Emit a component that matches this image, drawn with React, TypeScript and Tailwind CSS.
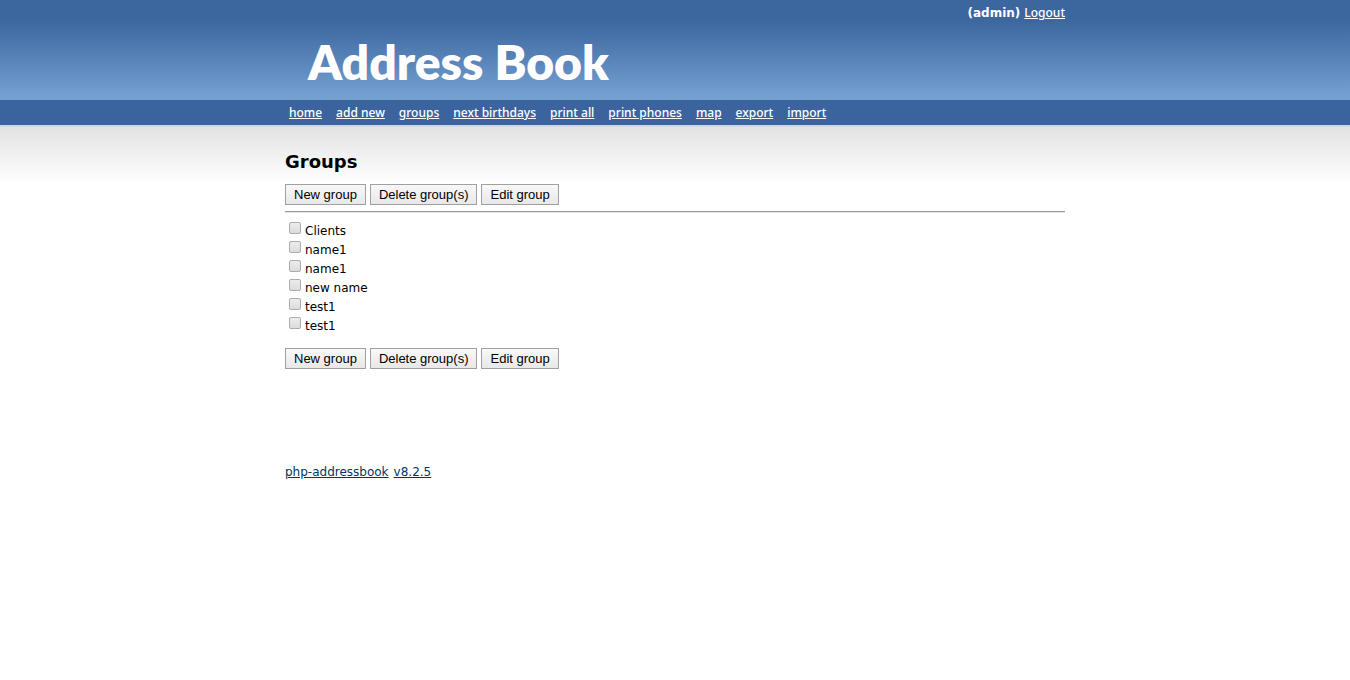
const navItems = [
  'home',
  'add new',
  'groups',
  'next birthdays',
  'print all',
  'print phones',
  'map',
  'export',
  'import',
];

const groups = ['Clients', 'name1', 'name1', 'new name', 'test1', 'test1'];

const actions = ['New group', 'Delete group(s)', 'Edit group'];

function Actions() {
  return (
    <div className="flex gap-1">
      {actions.map((label) => (
        <button
          key={label}
          type="button"
          className="h-[21px] border border-[#a0a0a0] bg-linear-to-b from-[#f8f8f8] to-[#e8e8e8] px-2 font-['Liberation_Sans',Arial,sans-serif] text-[13px] leading-[19px] whitespace-nowrap text-black"
        >
          {label}
        </button>
      ))}
    </div>
  );
}

export default function App() {
  return (
    <div className="min-h-screen bg-white font-[Verdana,'DejaVu_Sans',sans-serif] text-[12px] leading-[19px] text-black">
      <header className="h-[100px] bg-linear-to-b from-[#3c669e] from-20% to-[#739fd1] to-95% text-white">
        <div className="mx-auto max-w-[780px]">
          <div className="flex h-[25px] items-baseline justify-end gap-1 pt-[3px]">
            <b>(admin)</b>
            <a href="#logout" className="font-['Noto_Sans',sans-serif] font-medium underline">
              Logout
            </a>
          </div>
          <h1 className="pl-[23px] font-[Lato,sans-serif] text-[48px] leading-[74px] font-extrabold whitespace-nowrap">
            Address Book
          </h1>
        </div>
      </header>
      <nav className="border-b-2 border-[#cfd8e5] bg-[#3b649e]">
        <ul className="mx-auto flex h-[25px] max-w-[780px] items-center gap-3.5 pl-1 font-['Noto_Sans',sans-serif] font-medium whitespace-nowrap text-white">
          {navItems.map((item) => (
            <li key={item}>
              <a href={`#${item.replace(' ', '-')}`} className="underline">
                {item}
              </a>
            </li>
          ))}
        </ul>
      </nav>
      <div className="bg-linear-to-b from-[#e3e3e3] to-white to-[56px]">
        <main className="mx-auto max-w-[780px] pt-[23px]">
          <h2 className="mb-2.5 text-[18px] leading-6 font-bold">Groups</h2>
          <Actions />
          <hr className="mt-1.5 mb-2 border-t border-b border-t-[#9a9a9a] border-b-[#e6e6e6]" />
          <ul className="mb-[13px] pl-1">
            {groups.map((name, index) => (
              <li key={index}>
                <label className="flex h-[19px] items-start gap-1 leading-5">
                  <input
                    type="checkbox"
                    className="mt-px size-3 appearance-none rounded-xs border border-[#acacac] bg-linear-to-b from-[#ececec] to-[#dcdcdc] checked:from-[#3b649e] checked:to-[#3b649e]"
                  />
                  {name}
                </label>
              </li>
            ))}
          </ul>
          <Actions />
        </main>
        <footer className="mx-auto flex max-w-[780px] gap-[5px] pt-[94px] text-[#003366]">
          <a href="#project" className="underline">
            php-addressbook
          </a>
          <a href="#version" className="underline">
            v8.2.5
          </a>
        </footer>
      </div>
    </div>
  );
}
